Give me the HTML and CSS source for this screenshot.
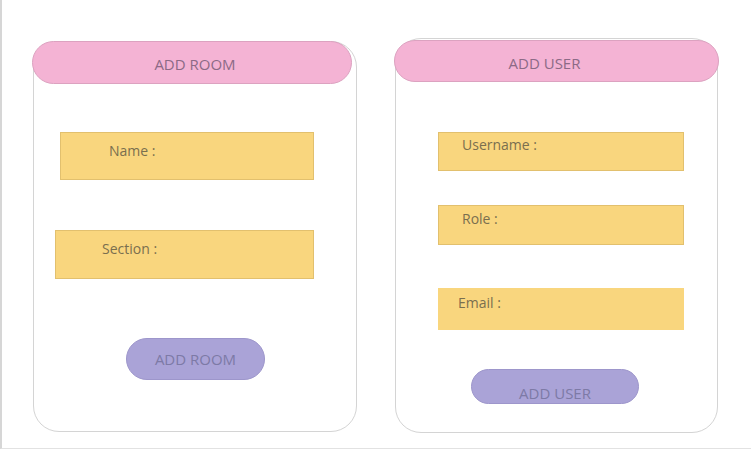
FILE: index.html
```html
<!DOCTYPE html>
<html>
<head>
<meta charset="utf-8">
<link rel="stylesheet" href="styles.css">
</head>
<body>
<div class="page">
  <div class="card card-room">
    <div class="card-head head-room">ADD ROOM</div>
    <div class="field f-name">Name :</div>
    <div class="field f-section">Section :</div>
    <div class="btn btn-room">ADD ROOM</div>
  </div>
  <div class="card card-user">
    <div class="card-head head-user">ADD USER</div>
    <div class="field f-username">Username :</div>
    <div class="field f-role">Role :</div>
    <div class="field f-email">Email :</div>
    <div class="btn btn-user">ADD USER</div>
  </div>
</div>
</body>
</html>
```

FILE: styles.css
```css
html, body {
  margin: 0;
  padding: 0;
  background: #ffffff;
}
body {
  width: 751px;
  height: 450px;
  overflow: hidden;
  font-family: "Open Sans", "Noto Sans", sans-serif;
}
.page {
  box-sizing: border-box;
  height: 449px;
  border-left: 2px solid #d6d6d6;
  border-bottom: 1px solid #e2e2e2;
  display: flex;
  align-items: flex-start;
  padding-left: 31px;
  gap: 38px;
}
.card {
  box-sizing: border-box;
  border: 1px solid #d4d4d4;
  border-radius: 26px;
  display: flex;
  flex-direction: column;
  align-items: flex-start;
}
.card-room {
  margin-top: 41px;
  width: 324px;
  height: 391px;
}
.card-user {
  margin-top: 38px;
  width: 323px;
  height: 395px;
}
.card-head {
  box-sizing: border-box;
  background: #f4b3d4;
  border: 1px solid #dca2c0;
  border-radius: 22px;
  color: #8c6a86;
  font-size: 15px;
  line-height: 20px;
  display: flex;
  align-items: center;
  justify-content: center;
  padding-top: 3px;
}
.head-room {
  margin: -1px 0 0 -2px;
  width: 320px;
  height: 43px;
  padding-left: 6px;
}
.head-user {
  margin: 1px 0 0 -2px;
  width: 325px;
  height: 42px;
  padding-right: 24px;
  padding-top: 4px;
}
.field {
  box-sizing: border-box;
  background: #f9d67e;
  border: 1px solid #e2c06e;
  color: #7a6f4f;
  font-size: 14px;
  line-height: 18px;
}
.f-name {
  margin: 48px 0 0 26px;
  width: 254px;
  height: 48px;
  padding: 9px 0 0 48px;
}
.f-section {
  margin: 50px 0 0 21px;
  width: 259px;
  height: 49px;
  padding: 9px 0 0 46px;
}
.f-username {
  margin: 50px 0 0 42px;
  width: 246px;
  height: 39px;
  padding: 3px 0 0 23px;
}
.f-role {
  margin: 34px 0 0 42px;
  width: 246px;
  height: 40px;
  padding: 4px 0 0 23px;
}
.f-email {
  margin: 43px 0 0 42px;
  width: 246px;
  height: 42px;
  padding: 5px 0 0 19px;
  border-color: #f9d67e;
}
.btn {
  box-sizing: border-box;
  background: #aaa3d7;
  border: 1px solid #9d96cb;
  border-radius: 21px;
  color: #7d7aa6;
  font-size: 15px;
  line-height: 18px;
  text-align: center;
}
.btn-room {
  margin: 59px 0 0 92px;
  width: 139px;
  height: 42px;
  padding-top: 11px;
}
.btn-user {
  margin: 39px 0 0 75px;
  width: 168px;
  height: 35px;
  padding-top: 14px;
  border-radius: 18px;
}
```
